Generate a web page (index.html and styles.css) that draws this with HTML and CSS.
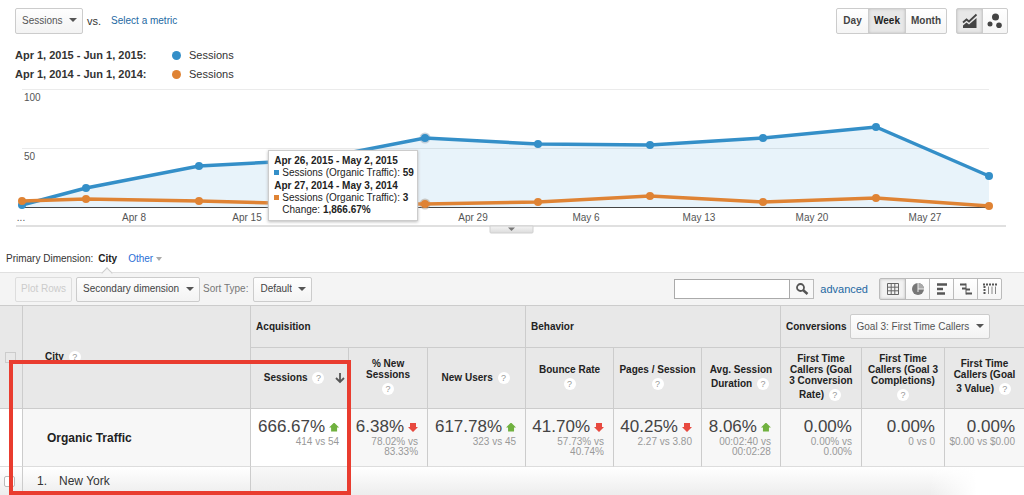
FILE: index.html
```html
<!DOCTYPE html>
<html lang="en">
<head>
<meta charset="utf-8">
<title>Analytics – Organic Traffic by City</title>
<link rel="stylesheet" href="styles.css">
</head>
<body>
<main>
  <header class="topbar">
    <span class="select"><select aria-label="Metric"><option>Sessions</option></select></span>
    <span class="vs">vs.</span>
    <a class="link" href="#">Select a metric</a>
    <div class="group period">
      <button type="button">Day</button>
      <button type="button" class="active">Week</button>
      <button type="button">Month</button>
    </div>
    <div class="group charttype">
      <button type="button" class="active" aria-label="Line chart">
        <svg width="16" height="16" viewBox="0 0 16 16"><path d="M1 9.5 4.5 6.5 7 8.500 14.500 1.500" fill="none" stroke="#444" stroke-width="1.800"/><path d="M1 15V12.500L4.500 9.500 7 11.500 14.500 5V15Z" fill="#444"/></svg>
      </button>
      <button type="button" aria-label="Motion chart">
        <svg width="16" height="16" viewBox="0 0 16 16"><circle cx="8.500" cy="4" r="3.500" fill="#444"/><circle cx="3" cy="11" r="2.500" fill="#444"/><circle cx="12" cy="12.300" r="2.800" fill="#444"/></svg>
      </button>
    </div>
  </header>

  <section class="legend">
    <b>Apr 1, 2015 - Jun 1, 2015:</b><i class="dot blue"></i><span>Sessions</span>
    <b>Apr 1, 2014 - Jun 1, 2014:</b><i class="dot orange"></i><span>Sessions</span>
  </section>

  <section class="chart">
    <svg class="plot" viewBox="0 84 1024 152" role="img" aria-label="Sessions per week">
      <defs><linearGradient id="tab" x1="0" y1="0" x2="0" y2="1"><stop offset="0" stop-color="#f4f4f4"/><stop offset="1" stop-color="#dcdcdc"/></linearGradient></defs>
      <path d="M22 89.500H989M22 148.500H989" stroke="#ebebeb"/>
      <path d="M22 205 86 188 199 166 312 160 425 138 538 144 650 145 763 138 876 127 989 176V207H22Z" fill="#0077cc" fill-opacity=".09"/>
      <path d="M22 207.500H989" stroke="#444"/>
      <circle cx="425" cy="138" r="5.500" fill="#9ab" fill-opacity=".5"/>
      <circle cx="425" cy="204" r="5.500" fill="#a98" fill-opacity=".5"/>
      <g fill="#348fc8">
        <path d="M22 205 86 188 199 166 312 160 425 138 538 144 650 145 763 138 876 127 989 176" fill="none" stroke="#348fc8" stroke-width="3.500"/>
        <circle cx="22" cy="205" r="4"/><circle cx="86" cy="188" r="4"/><circle cx="199" cy="166" r="4"/><circle cx="312" cy="160" r="4"/><circle cx="425" cy="138" r="4"/><circle cx="538" cy="144" r="4"/><circle cx="650" cy="145" r="4"/><circle cx="763" cy="138" r="4"/><circle cx="876" cy="127" r="4"/><circle cx="989" cy="176" r="4"/>
      </g>
      <g fill="#df8334">
        <path d="M22 201 86 199 199 201 312 204 425 204 538 202 650 196 763 202 876 198 989 206" fill="none" stroke="#df8334" stroke-width="3.500"/>
        <circle cx="22" cy="201" r="4"/><circle cx="86" cy="199" r="4"/><circle cx="199" cy="201" r="4"/><circle cx="312" cy="203" r="4"/><circle cx="425" cy="204" r="4"/><circle cx="538" cy="202" r="4"/><circle cx="650" cy="196" r="4"/><circle cx="763" cy="202" r="4"/><circle cx="876" cy="198" r="4"/><circle cx="989" cy="206" r="4"/>
      </g>
      <g class="axis">
        <text x="24" y="101">100</text><text x="24" y="160">50</text>
        <g text-anchor="middle"><text x="21" y="221">...</text><text x="134" y="221">Apr 8</text><text x="247" y="221">Apr 15</text><text x="473" y="221">Apr 29</text><text x="586" y="221">May 6</text><text x="699" y="221">May 13</text><text x="812" y="221">May 20</text><text x="925" y="221">May 27</text></g>
      </g>
      <path d="M16 226H1006" stroke="#e0e0e0" stroke-width="2"/>
      <path d="M490 226H533V232Q533 233 532 233H491Q490 233 490 232Z" fill="url(#tab)" stroke="#d0d0d0"/>
      <path d="M508 227.500H515L511.500 231Z" fill="#777"/>
    </svg>
    <div class="tooltip">
      <b>Apr 26, 2015 - May 2, 2015</b>
      <span><i class="square blue"></i>Sessions (Organic Traffic): <b>59</b></span>
      <b>Apr 27, 2014 - May 3, 2014</b>
      <span><i class="square orange"></i>Sessions (Organic Traffic): <b>3</b></span>
      <span><i class="square"></i>Change: <b>1,866.67%</b></span>
    </div>
  </section>

  <nav class="dimensions">
    <span>Primary Dimension:</span>
    <b class="current">City</b>
    <a class="other" href="#">Other</a>
  </nav>

  <section class="toolbar">
    <button type="button" class="plot-rows" disabled>Plot Rows</button>
    <span class="select"><select aria-label="Secondary dimension"><option>Secondary dimension</option></select></span>
    <label for="sort">Sort Type:</label>
    <span class="select"><select id="sort"><option>Default</option></select></span>
    <form class="search">
      <input type="text" aria-label="Search">
      <button type="button" aria-label="Search"><svg width="14" height="14" viewBox="0 0 14 14"><circle cx="5.500" cy="5.500" r="3.500" fill="none" stroke="#555" stroke-width="1.800"/><path d="M8 8 12.500 12" stroke="#555" stroke-width="2.500"/></svg></button>
    </form>
    <a class="link advanced" href="#">advanced</a>
    <div class="group views">
      <button type="button" class="active" aria-label="Table"><svg width="14" height="14" viewBox="0 0 14 14"><path d="M1.500 1.500H12.500V12.500H1.500ZM5.200 1.500V12.500M8.800 1.500V12.500M1.500 5.200H12.500M1.500 8.800H12.500" fill="none" stroke="#666"/></svg></button>
      <button type="button" aria-label="Percentage"><svg width="14" height="14" viewBox="0 0 14 14"><circle cx="7" cy="7" r="6" fill="#777"/><path d="M7 1V7H13A6 6 0 0 0 7 1" fill="#aaa"/><path d="M7 1V7H13M7 7V10" fill="none" stroke="#eee"/></svg></button>
      <button type="button" aria-label="Performance"><svg width="14" height="14" viewBox="0 0 14 14"><path d="M2 2.500H12M2 7H8M2 11.500H10" stroke="#555" stroke-width="2.500"/></svg></button>
      <button type="button" aria-label="Comparison"><svg width="14" height="14" viewBox="0 0 14 14"><path d="M1 2.500H7M3 6.500H7M7 7.500H11M7 11.500H13" stroke="#555" stroke-width="2"/><path d="M7 1.500V12.500" stroke="#555"/></svg></button>
      <button type="button" aria-label="Pivot"><svg width="14" height="14" viewBox="0 0 14 14"><path d="M0 2.500H14" stroke="#555" stroke-width="2" stroke-dasharray="2 1"/><path d="M1.500 4V12.500" stroke="#555" stroke-width="2" stroke-dasharray="2 1"/><path d="M5.500 4.500V12M9 4.500V12M12.500 4.500V12" stroke="#888"/></svg></button>
    </div>
  </section>

  <section class="report">
    <table>
      <colgroup><col class="c-check"><col class="c-city"><col class="c-wide"><col class="c-narrow"><col class="c-wide"><col class="c-mid"><col class="c-mid"><col class="c-narrow"><col class="c-rate"><col class="c-done"><col class="c-value"></colgroup>
      <thead>
        <tr class="cats">
          <th rowspan="2"><input type="checkbox" aria-label="Select all rows"></th>
          <th rowspan="2" class="city">City <i class="help">?</i></th>
          <th colspan="3">Acquisition</th>
          <th colspan="3">Behavior</th>
          <th colspan="3"><div class="goal"><label for="goal">Conversions</label><span class="select"><select id="goal"><option>Goal 3: First Time Callers</option></select></span></div></th>
        </tr>
        <tr class="metrics">
          <th><div class="sorted"><span>Sessions <i class="help">?</i></span><svg width="12" height="12" viewBox="0 0 12 12"><path d="M6 1V10M2 6 6 10 10 6" fill="none" stroke="#555" stroke-width="1.800"/></svg></div></th>
          <th>% New<br>Sessions<br><i class="help">?</i></th>
          <th>New Users <i class="help">?</i></th>
          <th>Bounce Rate<br><i class="help">?</i></th>
          <th>Pages / Session<br><i class="help">?</i></th>
          <th>Avg. Session<br>Duration <i class="help">?</i></th>
          <th>First Time<br>Callers (Goal<br>3 Conversion<br>Rate) <i class="help">?</i></th>
          <th>First Time<br>Callers (Goal 3<br>Completions)<br><i class="help">?</i></th>
          <th>First Time<br>Callers (Goal<br>3 Value) <i class="help">?</i></th>
        </tr>
      </thead>
      <tbody>
        <tr class="summary">
          <td class="plain"></td>
          <td class="segment">Organic Traffic</td>
          <td class="plain"><strong>666.67%<i class="up"></i></strong><small>414 vs 54</small></td>
          <td><strong>6.38%<i class="down"></i></strong><small>78.02% vs<br>83.33%</small></td>
          <td><strong>617.78%<i class="up"></i></strong><small>323 vs 45</small></td>
          <td><strong>41.70%<i class="down"></i></strong><small>57.73% vs<br>40.74%</small></td>
          <td><strong>40.25%<i class="down"></i></strong><small>2.27 vs 3.80</small></td>
          <td><strong>8.06%<i class="up"></i></strong><small>00:02:40 vs<br>00:02:28</small></td>
          <td><strong>0.00%</strong><small>0.00% vs<br>0.00%</small></td>
          <td><strong>0.00%</strong><small>0 vs 0</small></td>
          <td><strong>0.00%</strong><small>$0.00 vs $0.00</small></td>
        </tr>
        <tr class="row">
          <td><input type="checkbox" class="round" aria-label="Select New York"></td>
          <td><span class="index">1.</span>New York</td>
          <td class="sortcol"></td>
          <td colspan="8" class="fade"></td>
        </tr>
      </tbody>
    </table>
    <div class="highlight"></div>
  </section>
</main>
</body>
</html>
```
FILE: styles.css
```css
* { box-sizing: border-box; }
body { margin: 0; background: #fff; color: #333; font: 10px/12px "Liberation Sans", Arial, sans-serif; }
button, input, select { font: inherit; color: inherit; margin: 0; }
a { text-decoration: none; }
i { font-style: normal; }
svg { display: block; }
.link { color: #2469a3; }
.blue { background: #348fc8; }
.orange { background: #df8334; }

.select { position: relative; display: inline-flex; }
.select select { appearance: none; height: 25px; padding: 0 19px 0 6px; border: 1px solid #ccc; border-radius: 2px; background: linear-gradient(#fefefe, #f3f3f3); color: #555; }
.select::after { content: ""; position: absolute; right: 6px; top: 10px; border: 4px solid transparent; border-top-color: #555; border-bottom: 0; pointer-events: none; }

.group { display: flex; border: 1px solid #ccc; border-radius: 2px; background: linear-gradient(#fff, #f5f5f5); }
.group button { display: flex; align-items: center; justify-content: center; padding: 0; border: 0; border-left: 1px solid #ccc; background: none; font-weight: bold; color: #444; }
.group button:first-child { border-left: 0; }
.group .active { background: #e8e8e8; box-shadow: inset 0 0 3px #bbb; color: #222; }

.topbar { display: flex; align-items: center; padding: 8px 16px 0 15px; }
.topbar .select select { height: 26px; }
.vs { margin: 0 10px 0 4px; font-size: 11px; }
.period { height: 26px; margin-left: auto; }
.period button { min-width: 31px; padding: 0 5px; }
.charttype { height: 26px; margin-left: 9px; }
.charttype button { width: 25px; }

.legend { display: grid; grid-template-columns: max-content 9px max-content; column-gap: 8px; align-items: center; padding: 12px 0 0 15px; font-size: 11px; line-height: 19px; }
.legend b { min-width: 149px; }
.dot { width: 9px; height: 9px; border-radius: 50%; }

.chart { position: relative; }
.plot { width: 100%; }
.axis { font-size: 10px; fill: #555; }
.tooltip { position: absolute; left: 26.2%; top: 66px; display: flex; flex-direction: column; padding: 3px 3px 4px 5px; border: 1px solid #ccc; background: #fff; box-shadow: 0 1px 3px #bbb; white-space: nowrap; line-height: 12px; color: #222; }
.tooltip > b { line-height: 13px; }
.square { display: inline-block; width: 5px; height: 5px; margin-right: 3px; vertical-align: 1px; }

.dimensions { display: flex; align-items: center; gap: 5px; height: 36px; padding: 10px 6px 0; }
.current { position: relative; color: #222; }
.current::after { content: ""; position: absolute; left: 5px; top: 16px; width: 7px; height: 7px; border: solid #ccc; border-width: 1px 0 0 1px; background: #f5f5f5; transform: rotate(45deg); }
.other { display: flex; align-items: center; gap: 3px; margin-left: 6px; color: #2a6fd6; }
.other::after { content: ""; border: 3px solid transparent; border-top: 4px solid #aaa; border-bottom: 0; }

.toolbar { display: flex; align-items: center; height: 34px; padding: 0 22px 0 15px; border-top: 1px solid #e0e0e0; border-bottom: 1px solid #ccc; background: #f4f4f4; }
.plot-rows { height: 25px; margin-right: 4px; padding: 0 5px; border: 1px solid #ddd; border-radius: 2px; background: #f5f5f5; }
.toolbar .plot-rows { color: #ccc; }
.toolbar .select select { color: #444; }
.toolbar label { margin: 0 5px 0 3px; color: #777; }
.search { display: flex; margin-left: auto; }
.search input { width: 116px; height: 20px; padding: 0 4px; border: 1px solid #aaa; background: #fff; }
.search button { display: grid; place-items: center; width: 24px; height: 20px; padding: 0; border: 1px solid #bbb; border-left: 0; background: #f8f8f8; }
.advanced { margin: 0 11px 0 6px; font-size: 11px; }
.views { height: 22px; border-color: #bbb; }
.views button { width: 24px; border-color: #bbb; }
.views .active { width: 25px; background: #f2f2f2; }

.report { position: relative; }
table { width: 100%; table-layout: fixed; border-collapse: separate; border-spacing: 0; }
.c-check { width: 2.150%; } .c-city { width: 22.270%; } .c-wide { width: 9.570%; } .c-narrow { width: 7.710%; } .c-mid { width: 8.590%; } .c-rate { width: 7.910%; } .c-done { width: 8.110%; } .c-value { width: 7.810%; }
th, td { padding: 0; border-left: 1px solid #ccc; }
th:first-child, td:first-child { border-left: 0; }
.metrics th:first-child { border-left: 1px solid #ccc; }
th { background: #e8e8e8; color: #222; }
.cats th { height: 41px; padding-left: 5px; text-align: left; }
.cats .city { padding-left: 22px; }
.metrics th { height: 61px; padding: 0 4px; border-top: 1px solid #ccc; text-align: center; line-height: 11px; }
.metrics th:first-child { padding: 0 2px 0 5px; }
.help { display: inline-block; width: 12px; height: 12px; margin: 3px 2px; border-radius: 50%; background: #fff; color: #999; font-size: 9px; line-height: 12px; text-align: center; font-weight: normal; vertical-align: middle; }
.sorted { display: flex; align-items: center; }
.sorted span { flex: 1; }
.goal { display: flex; align-items: center; gap: 3px; }
.goal select { font-weight: normal; }
input[type="checkbox"] { appearance: none; display: block; width: 11px; height: 11px; border: 1px solid #ccc; }
input.round { margin-left: 4px; border-color: #bbb; border-radius: 2px; background: #fff; }

.summary td { height: 59px; padding: 8px 9px 0 0; border-top: 1px solid #ccc; border-bottom: 1px solid #ddd; background: #f7f7f7; text-align: right; vertical-align: top; }
.summary .plain { background: #fff; }
.summary .segment { padding: 0 0 0 24px; text-align: left; vertical-align: middle; font-size: 12px; font-weight: bold; color: #222; }
.summary strong { display: flex; align-items: center; justify-content: flex-end; gap: 4px; font-size: 17px; line-height: 20px; font-weight: normal; color: #444; }
.summary small { display: block; font-size: 10px; line-height: 10px; color: #999; }
.up, .down { width: 10px; height: 9px; clip-path: polygon(50% 0, 100% 55%, 80% 55%, 80% 100%, 20% 100%, 20% 55%, 0 55%); }
.up { background: #70b13f; }
.down { background: #e8493f; transform: rotate(180deg); }

.row td { height: 28px; background: linear-gradient(#fff, #ededed); font-size: 12px; }
.row .sortcol { background: linear-gradient(#f8f8f8, #ebebeb); }
.row .fade { border: 0; background: linear-gradient(90deg, transparent 86%, #fff 93%), linear-gradient(#fff, #ededed); }
.index { display: inline-block; width: 22px; margin-left: 14px; }
.highlight { position: absolute; left: 9px; top: 54px; bottom: 0; width: calc(34.300% - 9px); border: 4px solid #e93c2f; pointer-events: none; }
```
